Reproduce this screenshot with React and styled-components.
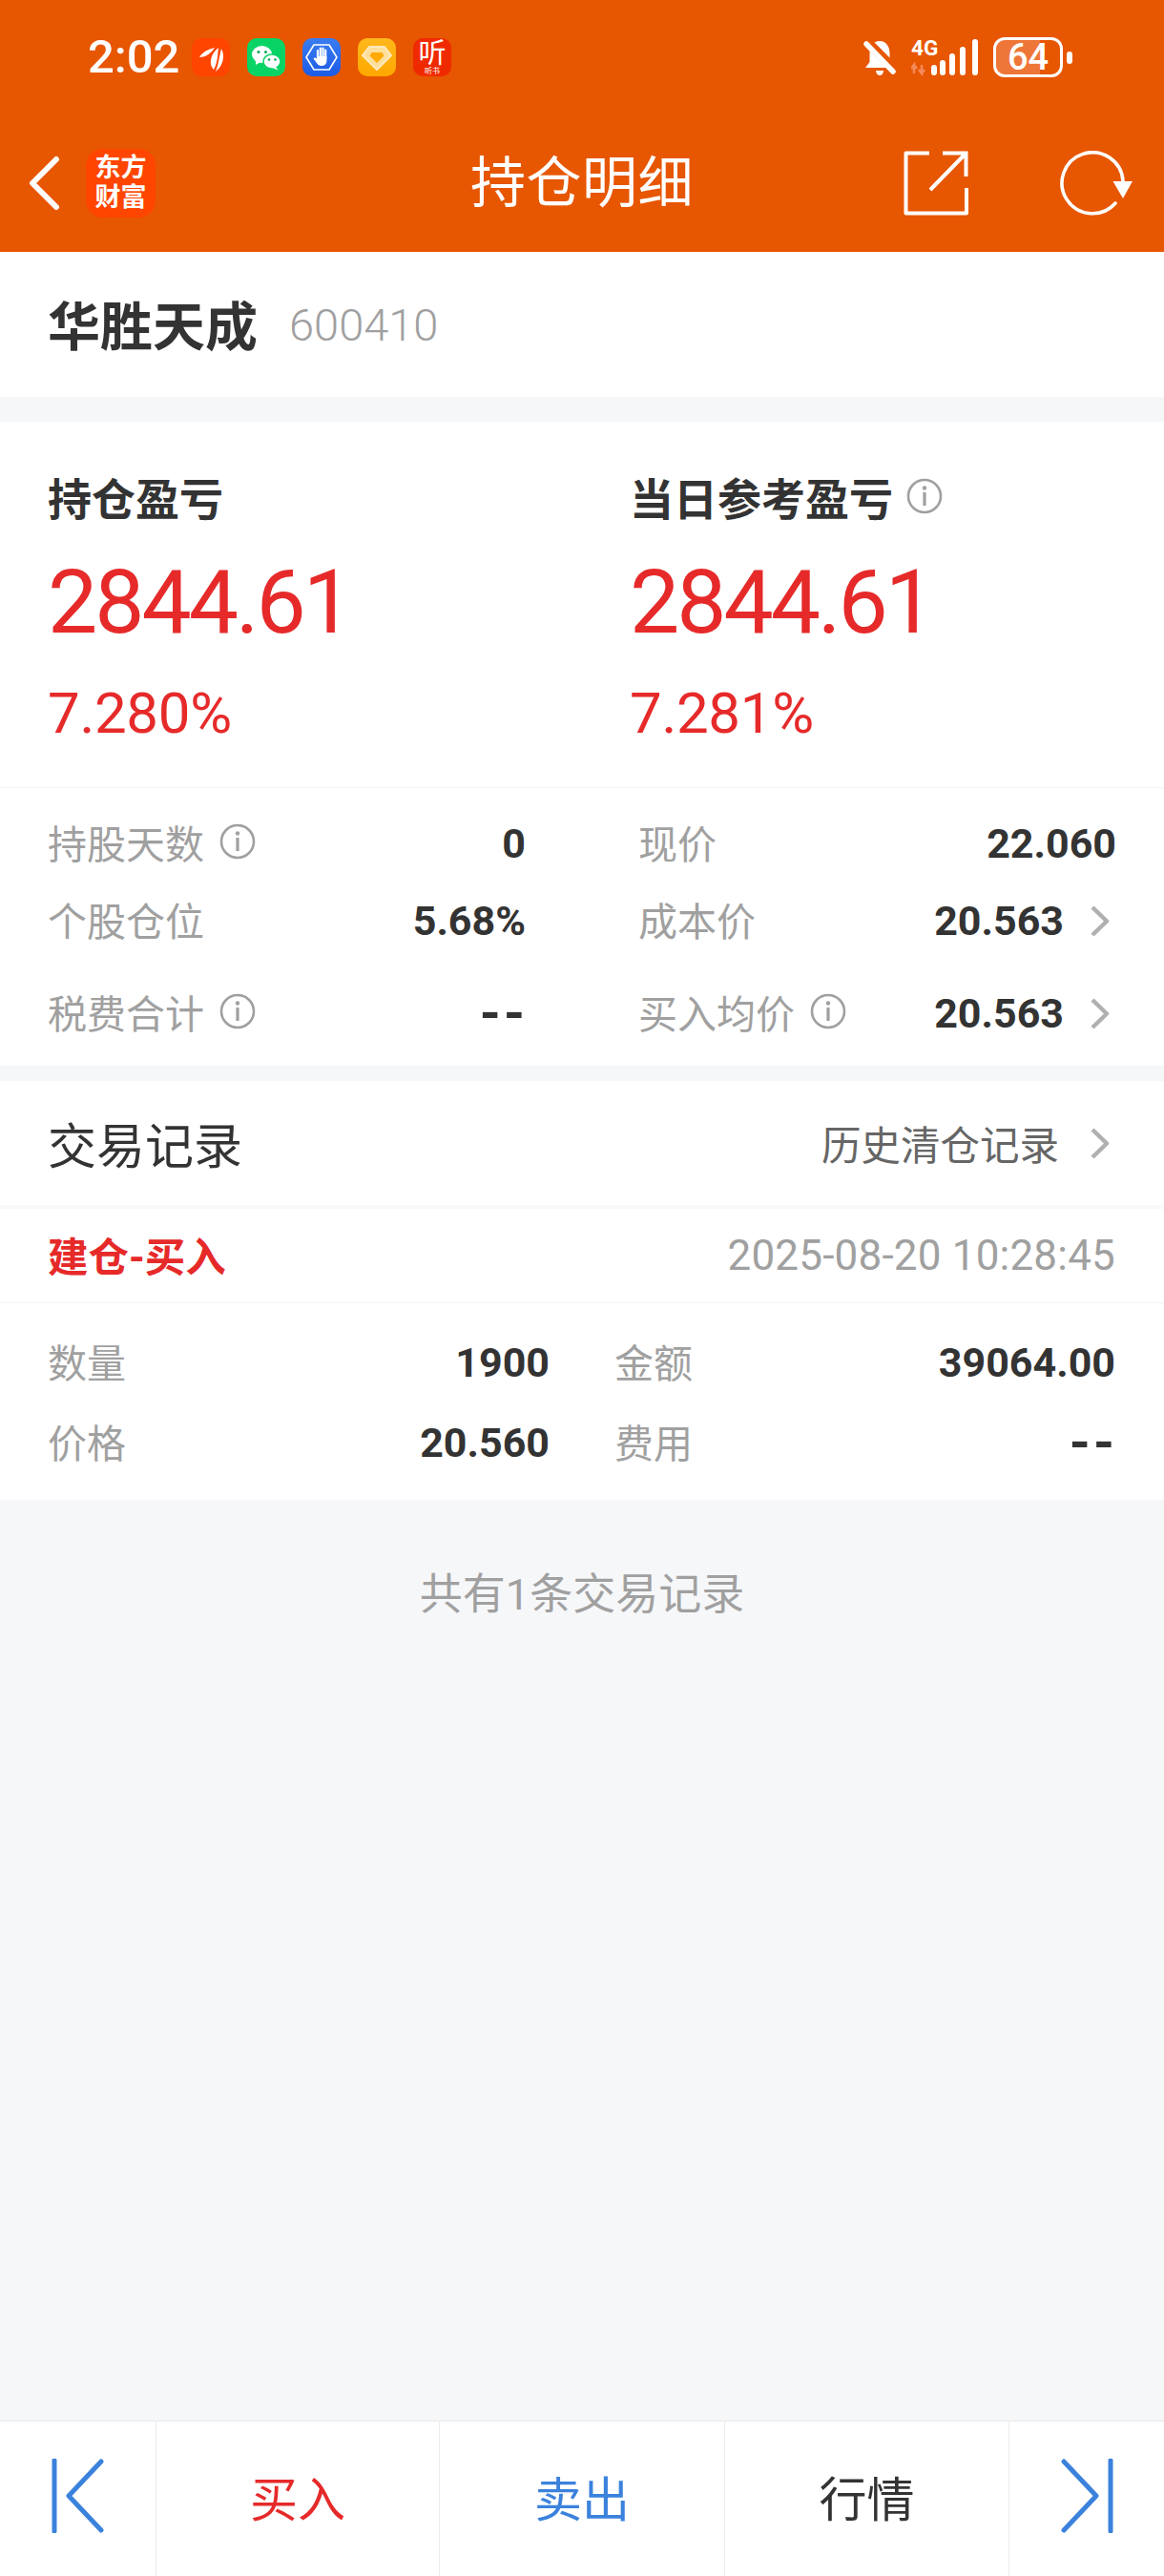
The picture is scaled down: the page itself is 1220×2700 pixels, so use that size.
import styled, { createGlobalStyle } from "styled-components";

const GlobalStyle = createGlobalStyle`
  html, body {
    margin: 0;
    padding: 0;
    background: #f6f7f9;
    font-family: Roboto, "Noto Sans CJK SC", sans-serif;
  }
`;

const ORANGE = "#e75600";
const RED = "#e62a2a";
const BLUE = "#3b82dc";
const DARK = "#333333";
const GREY = "#a0a0a0";

const Page = styled.div`
  width: 1220px;
  height: 2700px;
  display: flex;
  flex-direction: column;
  overflow: hidden;
`;

const Header = styled.header`
  background: ${ORANGE};
  color: #fff;
`;

const StatusBar = styled.div`
  height: 120px;
  padding: 0 96px 0 92px;
  display: flex;
  align-items: center;
  justify-content: space-between;
`;

const StatusLeft = styled.div`
  display: flex;
  align-items: center;
`;

const Time = styled.span`
  font-size: 49px;
  line-height: 48px;
  font-weight: 500;
  width: 109px;
`;

const AppIcons = styled.div`
  display: flex;
  gap: 18px;
`;

const AppIcon = styled.div`
  width: 40px;
  height: 40px;
  border-radius: 10px;
  background: ${(p) => p.$bg};
  display: flex;
  flex-direction: column;
  align-items: center;
  justify-content: center;
  overflow: hidden;
  svg {
    display: block;
  }
`;

const TingGlyph = styled.span`
  font-size: 29px;
  line-height: 28px;
  color: #fff;
`;

const TingLabel = styled.span`
  font-size: 8px;
  line-height: 9px;
  color: #fff;
`;

const StatusRight = styled.div`
  display: flex;
  align-items: center;
`;

const BellIcon = styled.svg`
  width: 34px;
  height: 40px;
  margin-right: 16px;
  display: block;
`;

const Signal = styled.div`
  position: relative;
  width: 72px;
  height: 40px;
  margin-right: 14px;
  svg {
    display: block;
  }
`;

const NetworkType = styled.span`
  position: absolute;
  left: 0;
  top: -1px;
  font-size: 22.5px;
  line-height: 22px;
  font-weight: 700;
  color: #fff;
`;

const Battery = styled.div`
  width: 73px;
  height: 42px;
  box-sizing: border-box;
  border: 3px solid #fff;
  border-radius: 12px;
  overflow: hidden;
  display: flex;
  align-items: center;
  justify-content: center;
  background: linear-gradient(to right, #ee7638 0 68%, transparent 68%);
`;

const BatteryValue = styled.span`
  font-size: 38px;
  line-height: 36px;
  font-weight: 500;
  color: #fff;
`;

const BatteryTip = styled.div`
  width: 6px;
  height: 13px;
  margin-left: 4px;
  border-radius: 3px;
  background: #fff;
`;

const NavBar = styled.div`
  height: 144px;
  display: grid;
  grid-template-columns: 1fr auto 1fr;
  align-items: center;
`;

const NavLeft = styled.div`
  display: flex;
  align-items: center;
  gap: 27px;
  padding-left: 29px;
`;

const Logo = styled.div`
  width: 73px;
  height: 72px;
  border-radius: 18px;
  background: #ff4500;
  display: flex;
  align-items: center;
  justify-content: center;
  text-align: center;
  font-size: 27px;
  line-height: 31px;
  font-weight: 700;
  color: #fff;
`;

const NavTitle = styled.h1`
  margin: 0;
  font-size: 58px;
  line-height: 70px;
  font-weight: 400;
  letter-spacing: 0.5px;
`;

const NavRight = styled.div`
  display: flex;
  align-items: center;
  justify-content: flex-end;
  gap: 96px;
  padding-right: 33px;
  svg {
    display: block;
  }
`;

const NameRow = styled.section`
  height: 152px;
  background: #fff;
  display: flex;
  align-items: center;
  gap: 33px;
  padding-left: 50px;
`;

const StockName = styled.span`
  font-size: 55px;
  font-weight: 700;
  color: ${DARK};
  padding-bottom: 5px;
`;

const StockCode = styled.span`
  font-size: 47px;
  font-weight: 300;
  color: ${GREY};
`;

const Summary = styled.section`
  margin-top: 26px;
  background: #fff;
  height: 384px;
  box-sizing: border-box;
  padding: 52px 0 0 50px;
  border-bottom: 1px solid #f5f5f5;
  display: grid;
  grid-template-columns: 610px 1fr;
  align-content: start;
`;

const SummaryCol = styled.div`
  display: flex;
  flex-direction: column;
`;

const SummaryLabel = styled.div`
  height: 56px;
  display: flex;
  align-items: center;
  gap: 14px;
  font-size: 46px;
  font-weight: 700;
  color: ${DARK};
  padding-bottom: 4px;
  box-sizing: border-box;
`;

const BigValue = styled.div`
  margin-top: 32px;
  font-size: 93px;
  line-height: 100px;
  letter-spacing: -3px;
  color: ${RED};
`;

const Percent = styled.div`
  margin-top: 30px;
  font-size: 60px;
  line-height: 72px;
  letter-spacing: -0.3px;
  color: ${RED};
`;

const Stats = styled.section`
  background: #fff;
  height: 291px;
  box-sizing: border-box;
  padding: 22px 50px 0 50px;
  display: grid;
  grid-template-columns: 501px 501px;
  grid-template-rows: 72px 90px 104px;
  column-gap: 118px;
`;

const Field = styled.div`
  display: flex;
  align-items: center;
  justify-content: space-between;
`;

const FieldLabel = styled.span`
  display: flex;
  align-items: center;
  gap: 16px;
  font-size: 41px;
  color: ${GREY};
  padding-bottom: 5px;
`;

const FieldValue = styled.span`
  display: flex;
  align-items: center;
  font-size: 43px;
  font-weight: 700;
  color: ${DARK};
`;

const Dashes = styled.span`
  font-size: 56px;
  line-height: 43px;
  font-weight: 700;
  letter-spacing: 3px;
  margin-right: -2px;
  color: ${DARK};
`;

const ChevronIcon = styled.svg`
  width: 21px;
  height: 35px;
  display: block;
  margin-left: ${(p) => p.$gap}px;
  margin-right: 7px;
`;

const Trades = styled.section`
  margin-top: 16px;
  background: #fff;
`;

const TradesHead = styled.div`
  height: 130px;
  padding: 0 50px;
  display: flex;
  align-items: center;
  justify-content: space-between;
  border-bottom: 4px solid #f8f9fa;
`;

const TradesTitle = styled.h2`
  margin: 0;
  font-size: 51px;
  font-weight: 400;
  color: ${DARK};
`;

const HistoryLink = styled.span`
  display: flex;
  align-items: center;
  font-size: 41.5px;
  color: #666;
`;

const TradeRow = styled.div`
  height: 98px;
  padding: 0 51px 0 50px;
  display: flex;
  align-items: center;
  justify-content: space-between;
  border-bottom: 1px solid #f4f4f4;
`;

const TradeType = styled.span`
  font-size: 42.5px;
  font-weight: 700;
  color: ${RED};
  padding-bottom: 4px;
`;

const TradeTime = styled.span`
  font-size: 44px;
  letter-spacing: 0.2px;
  color: ${GREY};
`;

const TradeDetails = styled.div`
  padding: 20px 51px 18px 50px;
  display: grid;
  grid-template-columns: 526px 525px;
  grid-auto-rows: 84px;
  column-gap: 68px;
`;

const Footnote = styled.p`
  margin: 70px 0 0;
  text-align: center;
  font-size: 45px;
  line-height: 60px;
  color: ${GREY};
`;

const Spacer = styled.div`
  flex: 1;
`;

const Toolbar = styled.footer`
  height: 163px;
  box-sizing: border-box;
  background: #fff;
  border-top: 1px solid #e8e8e8;
  display: grid;
  grid-template-columns: 164px 297px 299px 298px 1fr;
`;

const ToolCell = styled.div`
  display: flex;
  align-items: center;
  justify-content: center;
  padding-bottom: 6px;
  font-size: 50px;
  color: ${(p) => p.$color || DARK};
  border-right: ${(p) => (p.$last ? "none" : "1px solid #ebebeb")};
`;

const StepIcon = styled.svg`
  width: 56px;
  height: 78px;
  display: block;
  transform: ${(p) => (p.$flip ? "scaleX(-1)" : "none")};
`;

const InfoSvg = styled.svg`
  width: 38px;
  height: 38px;
  display: block;
`;

function Info() {
  return (
    <InfoSvg viewBox="0 0 38 38">
      <circle cx="19" cy="19" r="17" fill="none" stroke="#a0a0a0" strokeWidth="2.6" />
      <circle cx="19" cy="10.5" r="2.2" fill="#a0a0a0" />
      <rect x="17.4" y="15" width="3.2" height="14" fill="#a0a0a0" />
    </InfoSvg>
  );
}

function Chevron({ gap = 27 }) {
  return (
    <ChevronIcon $gap={gap} viewBox="0 0 21 35">
      <path d="M3 3 L18 17.5 L3 32" fill="none" stroke="#b0b0b0" strokeWidth="4.5" strokeLinejoin="round" />
    </ChevronIcon>
  );
}

function Step({ flip }) {
  return (
    <StepIcon $flip={flip} viewBox="0 0 56 78">
      <path d="M3 2 V76" stroke={BLUE} strokeWidth="5" strokeLinecap="round" fill="none" />
      <path d="M52 3 L18 39 L52 75" stroke={BLUE} strokeWidth="5" strokeLinecap="round" strokeLinejoin="round" fill="none" />
    </StepIcon>
  );
}

function StatField({ label, value, info, chevron }) {
  return (
    <Field>
      <FieldLabel>
        {label}
        {info && <Info />}
      </FieldLabel>
      {value === "--" ? (
        <Dashes>--</Dashes>
      ) : (
        <FieldValue>
          {value}
          {chevron && <Chevron />}
        </FieldValue>
      )}
    </Field>
  );
}

export default function App() {
  return (
    <Page>
      <GlobalStyle />
      <Header>
        <StatusBar>
          <StatusLeft>
            <Time>2:02</Time>
            <AppIcons>
              <AppIcon $bg="#ff4500">
                <svg width="40" height="40" viewBox="0 0 40 40">
                  <path d="M8 20 C12 13 20 11 24 10 C21 15 15 20 8 20 Z" fill="#fff" />
                  <path d="M23 33 C17 27 20 16 28 10 C27 18 27 26 23 33 Z" fill="#fff" />
                  <path d="M25 35 C28 28 29 18 31 11 C35 18 33 29 25 35 Z" fill="#fff" />
                </svg>
              </AppIcon>
              <AppIcon $bg="#08d465">
                <svg width="40" height="40" viewBox="0 0 40 40">
                  <ellipse cx="15.5" cy="17" rx="10.5" ry="9" fill="#fff" />
                  <path d="M9 23 L9 28 L14 25 Z" fill="#fff" />
                  <ellipse cx="26" cy="24.5" rx="9" ry="7.6" fill="#fff" stroke="#08d465" strokeWidth="1.5" />
                  <path d="M30 30 L32.5 33.5 L26 31 Z" fill="#fff" />
                  <circle cx="12" cy="14.5" r="1.5" fill="#08a850" />
                  <circle cx="19.5" cy="14.5" r="1.5" fill="#08a850" />
                  <circle cx="23" cy="22.5" r="1.3" fill="#08a850" />
                  <circle cx="29.5" cy="22.5" r="1.3" fill="#08a850" />
                </svg>
              </AppIcon>
              <AppIcon $bg="linear-gradient(#3a7cf0, #1c5be6)">
                <svg width="40" height="40" viewBox="0 0 40 40">
                  <path d="M12 7 H28 L36 20 L28 33 H12 L4 20 Z" fill="none" stroke="#fff" strokeWidth="1.6" strokeLinejoin="round" />
                  <path d="M16 13 V21 M18.8 10.5 V20 M21.5 10.5 V20 M24.2 12.5 V21" stroke="#fff" strokeWidth="2.2" strokeLinecap="round" />
                  <path d="M15 19 H25.4 V24 C25.4 27 23 29 20 29 C17 29 15.5 27 13.8 24.5 L11.5 21.5 C12.5 20 14 20.5 15 21.5 Z" fill="#fff" />
                </svg>
              </AppIcon>
              <AppIcon $bg="linear-gradient(#ffb71c, #ffa800)">
                <svg width="40" height="40" viewBox="0 0 40 40">
                  <path d="M12 9 H28 L35 18 L20 33 L5 18 Z" fill="#ffdf9a" stroke="#ffe9bd" strokeWidth="2" strokeLinejoin="round" />
                  <path d="M14.5 15 H25.5 L27.5 18.5 L20 26 L12.5 18.5 Z" fill="#ffaa05" />
                </svg>
              </AppIcon>
              <AppIcon $bg="#f02a00">
                <TingGlyph>听</TingGlyph>
                <TingLabel>听书</TingLabel>
              </AppIcon>
            </AppIcons>
          </StatusLeft>
          <StatusRight>
            <BellIcon viewBox="0 0 34 40">
              <path d="M17 3 C24 3 27.5 9 27.5 16 V25 L32 31 H2 L6.5 25 V16 C6.5 9 10 3 17 3 Z" fill="#fff" />
              <path d="M13 34 H21 C21 37 19 39 17 39 C15 39 13 37 13 34 Z" fill="#fff" />
              <path d="M0 0 L36 36" stroke={ORANGE} strokeWidth="10" />
              <path d="M3 6 L31 35" stroke="#fff" strokeWidth="5.5" strokeLinecap="round" />
            </BellIcon>
            <Signal>
              <NetworkType>4G</NetworkType>
              <svg width="72" height="40" viewBox="0 0 72 40">
                <path d="M3 37 V28 L0 32 M3 28 L6 32 M11 28 V37 L8 33 M11 37 L14 33" fill="none" stroke="#f58a5c" strokeWidth="2.5" />
                <rect x="21" y="28" width="6" height="11" rx="3" fill="#fff" />
                <rect x="30" y="23" width="6" height="16" rx="3" fill="#fff" />
                <rect x="40" y="16" width="6" height="23" rx="3" fill="#fff" />
                <rect x="51" y="9" width="6" height="30" rx="3" fill="#fff" />
                <rect x="64" y="1" width="6" height="38" rx="3" fill="#fff" />
              </svg>
            </Signal>
            <Battery>
              <BatteryValue>64</BatteryValue>
            </Battery>
            <BatteryTip />
          </StatusRight>
        </StatusBar>
        <NavBar>
          <NavLeft>
            <svg width="34" height="58" viewBox="0 0 34 58">
              <path d="M30 4 L5 29 L30 54" fill="none" stroke="#fff" strokeWidth="6" strokeLinecap="round" strokeLinejoin="round" />
            </svg>
            <Logo>
              东方
              <br />
              财富
            </Logo>
          </NavLeft>
          <NavTitle>持仓明细</NavTitle>
          <NavRight>
            <svg width="68" height="68" viewBox="0 0 68 68">
              <path d="M27 2.5 H2.5 V65.5 H66 V39" fill="none" stroke="#fff" strokeWidth="4" strokeLinejoin="round" />
              <path d="M41 2.5 H65.5 V27 M65.5 2.5 L28 41" fill="none" stroke="#fff" strokeWidth="4" />
            </svg>
            <svg width="76" height="68" viewBox="0 0 76 68">
              <path d="M58 55 A32 32 0 1 1 66 32" fill="none" stroke="#fff" strokeWidth="3.6" strokeLinecap="round" />
              <path d="M55.5 32 H76 L66 50 Z" fill="#fff" />
            </svg>
          </NavRight>
        </NavBar>
      </Header>

      <NameRow>
        <StockName>华胜天成</StockName>
        <StockCode>600410</StockCode>
      </NameRow>

      <Summary>
        <SummaryCol>
          <SummaryLabel>持仓盈亏</SummaryLabel>
          <BigValue>2844.61</BigValue>
          <Percent>7.280%</Percent>
        </SummaryCol>
        <SummaryCol>
          <SummaryLabel>
            当日参考盈亏
            <Info />
          </SummaryLabel>
          <BigValue>2844.61</BigValue>
          <Percent>7.281%</Percent>
        </SummaryCol>
      </Summary>

      <Stats>
        <StatField label="持股天数" value="0" info />
        <StatField label="现价" value="22.060" />
        <StatField label="个股仓位" value="5.68%" />
        <StatField label="成本价" value="20.563" chevron />
        <StatField label="税费合计" value="--" info />
        <StatField label="买入均价" value="20.563" info chevron />
      </Stats>

      <Trades>
        <TradesHead>
          <TradesTitle>交易记录</TradesTitle>
          <HistoryLink>
            历史清仓记录
            <Chevron gap={32} />
          </HistoryLink>
        </TradesHead>
        <TradeRow>
          <TradeType>建仓-买入</TradeType>
          <TradeTime>2025-08-20 10:28:45</TradeTime>
        </TradeRow>
        <TradeDetails>
          <StatField label="数量" value="1900" />
          <StatField label="金额" value="39064.00" />
          <StatField label="价格" value="20.560" />
          <StatField label="费用" value="--" />
        </TradeDetails>
      </Trades>

      <Footnote>共有1条交易记录</Footnote>
      <Spacer />

      <Toolbar>
        <ToolCell>
          <Step />
        </ToolCell>
        <ToolCell $color={RED}>买入</ToolCell>
        <ToolCell $color={BLUE}>卖出</ToolCell>
        <ToolCell>行情</ToolCell>
        <ToolCell $last>
          <Step flip />
        </ToolCell>
      </Toolbar>
    </Page>
  );
}
